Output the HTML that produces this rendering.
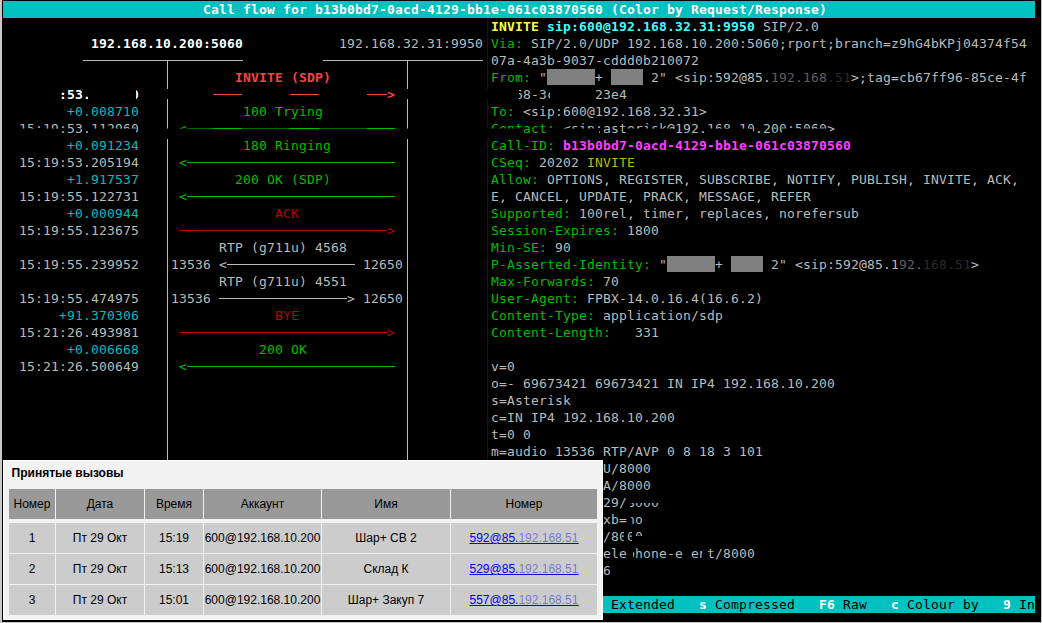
<!DOCTYPE html>
<html lang="ru">
<head>
<meta charset="utf-8">
<title>Call flow</title>
<style>
html,body{margin:0;padding:0;background:#000;}
body{width:1042px;height:623px;position:relative;overflow:hidden;}
#term{position:absolute;left:0;top:0;width:1042px;height:623px;background:#000;overflow:hidden;
  font-family:"DejaVu Sans Mono","Liberation Mono",monospace;font-size:13px;letter-spacing:0.1733px;line-height:17px;}
.t{position:absolute;white-space:pre;height:17px;line-height:17px;}
.b{position:absolute;display:block;}
.g{color:#bbbbbb}
.W{color:#ffffff;font-weight:bold}
.c{color:#00bbbb}
.G{color:#00bb00}
.r{color:#bb0000}
.R{color:#ff4040;font-weight:bold}
.Y{color:#ffff40;font-weight:bold}
.C{color:#40ffff;font-weight:bold}
.y{color:#bbbb00}
.M{color:#ff40ff;font-weight:bold}
.k{color:#000000}
.bg{background:#bbbbbb}
.bG{background:#00bb00}
.br{background:#bb0000}
.bR{background:#ff4040}
.bb{background:#0000bb}
.rd{background:#808080}
.x{background:#000}
.band{left:12px;width:468px;background:repeating-linear-gradient(90deg,#000 0,#000 47px,transparent 47px,transparent 76px,#000 76px,#000 77px)}
.band2b{left:480px;width:562px;background:repeating-linear-gradient(90deg,#000 0,#000 42.5px,transparent 42.5px,transparent 70.5px,#000 70.5px,#000 77px)}
.band2{left:480px;width:562px;background:repeating-linear-gradient(90deg,#000 0,#000 39.5px,transparent 39.5px,transparent 70.5px,#000 70.5px,#000 77px)}
.dim{opacity:.45}
.sm{opacity:.5}
.sm3{opacity:.22}
.sm2{color:rgba(0,0,238,.45);text-decoration:underline;text-decoration-color:rgba(0,0,238,.85)}
.cy{background:#00c0c0}
.edge{background:#c8c8c8}
#panel{position:absolute;left:3px;top:460px;width:598px;height:158px;background:#f2f2f2;border:1px solid #fff;
  font-family:"Liberation Sans",sans-serif;font-size:12px;color:#000;}
#panel h3{position:absolute;left:7.6px;top:3px;margin:0;font-size:12px;line-height:18px;font-weight:bold;color:#000;}
#panel table{position:absolute;left:4px;top:27px;border-collapse:separate;border-spacing:1px;table-layout:fixed;}
#panel th,#panel td{height:30px;padding:0;text-align:center;font-weight:normal;white-space:nowrap;overflow:hidden;}
#panel th{background:#999999;}
#panel td{background:#cccccc;}
#panel thead th{border-bottom:3px solid #f2f2f2;background-clip:padding-box;}
#panel a{color:#0000ee;text-decoration:underline;}
</style>
</head>
<body>
<div id="term">
<i class="b cy" style="left:3px;top:1px;width:1032px;height:17px"></i>
<i class="b cy" style="left:3px;top:596px;width:1032px;height:17px"></i>
<i class="b bg" style="left:83px;top:60px;width:160px;height:1px"></i>
<i class="b bg" style="left:323px;top:60px;width:160px;height:1px"></i>
<i class="b bg" style="left:167px;top:60px;width:1px;height:400px"></i>
<i class="b bg" style="left:407px;top:60px;width:1px;height:400px"></i>
<i class="b bb" style="left:487px;top:18px;width:1px;height:578px"></i>
<i class="b bR" style="left:179px;top:94px;width:208px;height:1px"></i>
<i class="b bG" style="left:187px;top:128px;width:208px;height:1px"></i>
<i class="b bG" style="left:187px;top:162px;width:208px;height:1px"></i>
<i class="b bG" style="left:187px;top:196px;width:208px;height:1px"></i>
<i class="b br" style="left:179px;top:230px;width:208px;height:1px"></i>
<i class="b bg" style="left:227px;top:264px;width:128px;height:1px"></i>
<i class="b bg" style="left:219px;top:298px;width:128px;height:1px"></i>
<i class="b br" style="left:179px;top:332px;width:208px;height:1px"></i>
<i class="b bG" style="left:187px;top:366px;width:208px;height:1px"></i>
<i class="b rd" style="left:547px;top:69px;width:48px;height:16px"></i>
<i class="b rd" style="left:611px;top:69px;width:32px;height:16px"></i>
<i class="b rd" style="left:667px;top:256px;width:48px;height:16px"></i>
<i class="b rd" style="left:731px;top:256px;width:32px;height:16px"></i>
<span class="t W" style="left:203px;top:1px">Call flow for b13b0bd7-0acd-4129-bb1e-061c03870560 (Color by Request/Response)</span>
<span class="t Y" style="left:491px;top:18px">INVITE</span>
<span class="t C" style="left:547px;top:18px">sip:600@192.168.32.31:9950</span>
<span class="t g" style="left:763px;top:18px">SIP/2.0</span>
<span class="t W" style="left:91px;top:35px">192.168.10.200:5060</span>
<span class="t g" style="left:339px;top:35px">192.168.32.31:9950</span>
<span class="t G" style="left:491px;top:35px">Via:</span>
<span class="t g" style="left:531px;top:35px">SIP/2.0/UDP 192.168.10.200:5060;rport;branch=z9hG4bKPj04374f54</span>
<span class="t g" style="left:491px;top:52px">07a-4a3b-9037-cddd0b210072</span>
<span class="t R" style="left:235px;top:69px">INVITE (SDP)</span>
<span class="t G" style="left:491px;top:69px">From:</span>
<span class="t g" style="left:539px;top:69px">&quot;</span>
<span class="t g" style="left:595px;top:69px">+</span>
<span class="t g" style="left:651px;top:69px">2&quot; &lt;sip:592@85.</span>
<span class="t g sm" style="left:771px;top:69px">192.168</span>
<span class="t g sm3" style="left:827px;top:69px">.51</span>
<span class="t g" style="left:851px;top:69px">&gt;;tag=cb67ff96-85ce-4f</span>
<span class="t W" style="left:19px;top:86px">15:19:53.104250</span>
<span class="t g" style="left:491px;top:86px">-4768-3c19b4d23e4</span>
<span class="t c" style="left:67px;top:103px">+0.008710</span>
<span class="t G" style="left:243px;top:103px">100 Trying</span>
<span class="t G" style="left:491px;top:103px">To:</span>
<span class="t g" style="left:523px;top:103px">&lt;sip:600@192.168.32.31&gt;</span>
<span class="t g" style="left:19px;top:120px">15:19:53.112960</span>
<span class="t G" style="left:491px;top:120px">Contact:</span>
<span class="t g" style="left:563px;top:120px">&lt;sip:asterisk@192.168.10.200:5060&gt;</span>
<span class="t c" style="left:67px;top:137px">+0.091234</span>
<span class="t G" style="left:243px;top:137px">180 Ringing</span>
<span class="t G" style="left:491px;top:137px">Call-ID:</span>
<span class="t M" style="left:563px;top:137px">b13b0bd7-0acd-4129-bb1e-061c03870560</span>
<span class="t g" style="left:19px;top:154px">15:19:53.205194</span>
<span class="t G" style="left:491px;top:154px">CSeq:</span>
<span class="t g" style="left:539px;top:154px">20202</span>
<span class="t y" style="left:587px;top:154px">INVITE</span>
<span class="t c" style="left:67px;top:171px">+1.917537</span>
<span class="t G" style="left:235px;top:171px">200 OK (SDP)</span>
<span class="t G" style="left:491px;top:171px">Allow:</span>
<span class="t g" style="left:547px;top:171px">OPTIONS, REGISTER, SUBSCRIBE, NOTIFY, PUBLISH, INVITE, ACK,</span>
<span class="t g" style="left:19px;top:188px">15:19:55.122731</span>
<span class="t g" style="left:491px;top:188px">E, CANCEL, UPDATE, PRACK, MESSAGE, REFER</span>
<span class="t c" style="left:67px;top:205px">+0.000944</span>
<span class="t r" style="left:275px;top:205px">ACK</span>
<span class="t G" style="left:491px;top:205px">Supported:</span>
<span class="t g" style="left:579px;top:205px">100rel, timer, replaces, norefersub</span>
<span class="t g" style="left:19px;top:222px">15:19:55.123675</span>
<span class="t G" style="left:491px;top:222px">Session-Expires:</span>
<span class="t g" style="left:627px;top:222px">1800</span>
<span class="t g" style="left:219px;top:239px">RTP (g711u) 4568</span>
<span class="t G" style="left:491px;top:239px">Min-SE:</span>
<span class="t g" style="left:555px;top:239px">90</span>
<span class="t g" style="left:19px;top:256px">15:19:55.239952</span>
<span class="t g" style="left:171px;top:256px">13536</span>
<span class="t g" style="left:363px;top:256px">12650</span>
<span class="t G" style="left:491px;top:256px">P-Asserted-Identity:</span>
<span class="t g" style="left:659px;top:256px">&quot;</span>
<span class="t g" style="left:715px;top:256px">+</span>
<span class="t g" style="left:771px;top:256px">2&quot; &lt;sip:592@85.</span>
<span class="t g" style="left:891px;top:256px">1</span>
<span class="t g sm" style="left:899px;top:256px">92.</span>
<span class="t g sm3" style="left:923px;top:256px">168.51</span>
<span class="t g" style="left:971px;top:256px">&gt;</span>
<span class="t g" style="left:219px;top:273px">RTP (g711u) 4551</span>
<span class="t G" style="left:491px;top:273px">Max-Forwards:</span>
<span class="t g" style="left:603px;top:273px">70</span>
<span class="t g" style="left:19px;top:290px">15:19:55.474975</span>
<span class="t g" style="left:171px;top:290px">13536</span>
<span class="t g" style="left:363px;top:290px">12650</span>
<span class="t G" style="left:491px;top:290px">User-Agent:</span>
<span class="t g" style="left:587px;top:290px">FPBX-14.0.16.4(16.6.2)</span>
<span class="t c" style="left:59px;top:307px">+91.370306</span>
<span class="t r" style="left:275px;top:307px">BYE</span>
<span class="t G" style="left:491px;top:307px">Content-Type:</span>
<span class="t g" style="left:603px;top:307px">application/sdp</span>
<span class="t g" style="left:19px;top:324px">15:21:26.493981</span>
<span class="t G" style="left:491px;top:324px">Content-Length:</span>
<span class="t g" style="left:619px;top:324px">  331</span>
<span class="t c" style="left:67px;top:341px">+0.006668</span>
<span class="t G" style="left:259px;top:341px">200 OK</span>
<span class="t g" style="left:19px;top:358px">15:21:26.500649</span>
<span class="t g" style="left:491px;top:358px">v=0</span>
<span class="t g" style="left:491px;top:375px">o=- 69673421 69673421 IN IP4 192.168.10.200</span>
<span class="t g" style="left:491px;top:392px">s=Asterisk</span>
<span class="t g" style="left:491px;top:409px">c=IN IP4 192.168.10.200</span>
<span class="t g" style="left:491px;top:426px">t=0 0</span>
<span class="t g" style="left:491px;top:443px">m=audio 13536 RTP/AVP 0 8 18 3 101</span>
<span class="t g" style="left:491px;top:460px">a=rtpmap:0 PCMU/8000</span>
<span class="t g" style="left:491px;top:477px">a=rtpmap:8 PCMA/8000</span>
<span class="t g" style="left:491px;top:494px">a=rtpmap:18 G729/8000</span>
<span class="t g" style="left:491px;top:511px">a=fmtp:18 annexb=no</span>
<span class="t g" style="left:491px;top:528px">a=rtpmap:3 GSM/8000</span>
<span class="t g" style="left:491px;top:545px">a=rtpmap:101 telephone-event/8000</span>
<span class="t g" style="left:491px;top:562px">a=fmtp:101 0-16</span>
<span class="t k" style="left:611px;top:596px">Extended</span>
<span class="t W" style="left:699px;top:596px">s</span>
<span class="t k" style="left:715px;top:596px">Compressed</span>
<span class="t W" style="left:819px;top:596px">F6</span>
<span class="t k" style="left:843px;top:596px">Raw</span>
<span class="t W" style="left:891px;top:596px">c</span>
<span class="t k" style="left:907px;top:596px">Colour by</span>
<span class="t W" style="left:1003px;top:596px">9</span>
<span class="t k" style="left:1019px;top:596px">In</span>
<span class="t R" style="left:387px;top:86px">&gt;</span>
<span class="t G" style="left:179px;top:120px">&lt;</span>
<span class="t G" style="left:179px;top:154px">&lt;</span>
<span class="t G" style="left:179px;top:188px">&lt;</span>
<span class="t r" style="left:387px;top:222px">&gt;</span>
<span class="t g" style="left:219px;top:256px">&lt;</span>
<span class="t g" style="left:347px;top:290px">&gt;</span>
<span class="t r" style="left:387px;top:324px">&gt;</span>
<span class="t G" style="left:179px;top:358px">&lt;</span><i class="b band" style="top:89px;height:10px"></i><i class="b band2" style="top:89px;height:10px"></i>
<i class="b band" style="top:129px;height:10px"></i><i class="b band2b" style="top:129px;height:10px"></i>
<i class="b band2" style="top:495px;height:8px"></i>
<i class="b band2" style="top:581px;height:8px"></i>
<i class="b band dim" style="top:128px;height:1px"></i><i class="b band2 dim" style="top:128px;height:1px"></i>
<i class="b x" style="left:627px;top:511px;width:4px;height:17px"></i>
<i class="b x" style="left:624px;top:528px;width:3px;height:17px"></i>
<i class="b x" style="left:632px;top:528px;width:3px;height:17px"></i>
<i class="b x" style="left:635px;top:536px;width:9px;height:9px"></i>
<i class="b x" style="left:627px;top:545px;width:6px;height:17px"></i>
<i class="b x" style="left:683px;top:545px;width:8px;height:17px"></i>
<i class="b x" style="left:702px;top:545px;width:5px;height:17px"></i>
<i class="b x" style="left:627px;top:494px;width:3px;height:17px"></i>
<i class="b edge" style="left:0;top:0;width:2px;height:623px"></i>
<i class="b edge" style="left:1041px;top:0;width:1px;height:623px"></i>
<i class="b edge" style="left:0;top:622px;width:1042px;height:1px"></i>
</div>
<div id="panel">
<h3>Принятые вызовы</h3>
<table>
<colgroup><col style="width:46px"><col style="width:88px"><col style="width:58px"><col style="width:117px"><col style="width:128px"><col style="width:146px"></colgroup>
<thead><tr><th>Номер</th><th>Дата</th><th>Время</th><th>Аккаунт</th><th>Имя</th><th>Номер</th></tr></thead>
<tbody>
<tr><td>1</td><td>Пт 29 Окт</td><td>15:19</td><td>600@192.168.10.200</td><td>Шар+ СВ 2</td><td><a>592@85.<span class="sm2">192.168.51</span></a></td></tr>
<tr><td>2</td><td>Пт 29 Окт</td><td>15:13</td><td>600@192.168.10.200</td><td>Склад К</td><td><a>529@85.<span class="sm2">192.168.51</span></a></td></tr>
<tr><td>3</td><td>Пт 29 Окт</td><td>15:01</td><td>600@192.168.10.200</td><td>Шар+ Закуп 7</td><td><a>557@85.<span class="sm2">192.168.51</span></a></td></tr>
</tbody>
</table>
</div>
</body>
</html>
